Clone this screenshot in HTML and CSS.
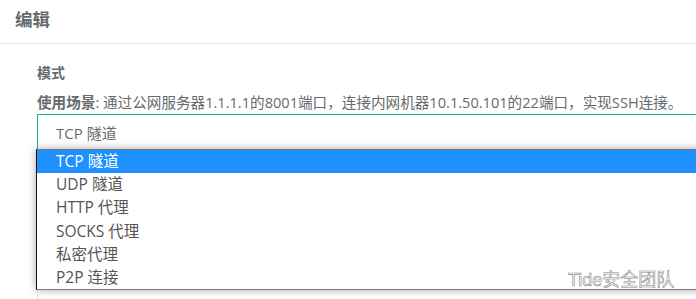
FILE: index.html
```html
<!DOCTYPE html>
<html lang="en">
<head>
  <meta charset="UTF-8">
  <meta name="viewport" content="width=device-width, initial-scale=1.0">
  <title>编辑</title>
  <link rel="stylesheet" href="styles.css">
</head>
<body>
  <div class="panel">
    <div class="panel-title">
      <h5>编辑</h5>
    </div>
    <div class="panel-body">
      <div class="form-group">
        <label class="label">模式</label>
        <p class="help"><b>使用场景</b>: 通过公网服务器1.1.1.1的8001端口，连接内网机器10.1.50.101的22端口，实现SSH连接。</p>
        <div class="select-wrap">
          <div class="select">TCP 隧道</div>
          <ul class="dropdown">
            <li class="option selected">TCP 隧道</li>
            <li class="option">UDP 隧道</li>
            <li class="option">HTTP 代理</li>
            <li class="option">SOCKS 代理</li>
            <li class="option">私密代理</li>
            <li class="option">P2P 连接</li>
          </ul>
        </div>
        <div class="next-field"></div>
      </div>
    </div>
  </div>
  <div class="watermark">Tide安全团队</div>
</body>
</html>
```

FILE: styles.css
```css
html, body {
  margin: 0;
  padding: 0;
  overflow: hidden;
  height: 299px;
}
body {
  font-family: "Open Sans", "Noto Sans CJK SC", sans-serif;
  color: #676a6c;
  background: #fff;
  position: relative;
}
.panel {
  height: 299px;
  overflow: hidden;
}
.panel-title {
  height: 44px;
  border-bottom: 1px solid #e7eaec;
  padding: 0 15px;
  box-sizing: border-box;
}
.panel-title h5 {
  margin: 0;
  padding-top: 6px;
  font-size: 17.5px;
  font-weight: 700;
  line-height: 26px;
}
.panel-body {
  padding: 19px 0 0 37px;
}
.label {
  display: block;
  font-size: 14px;
  font-weight: 700;
  line-height: 20px;
}
.help {
  margin: 9px 0 0;
  font-size: 14.6px;
  line-height: 20px;
  white-space: nowrap;
}
.help b {
  font-weight: 700;
}
.select-wrap {
  position: relative;
  margin-top: 2px;
  width: 720px;
}
.select {
  height: 35px;
  border: 1px solid #1ab394;
  border-bottom: none;
  padding-left: 18px;
  font-size: 15px;
  line-height: 36px;
}
.dropdown {
  position: absolute;
  top: 35px;
  left: -1px;
  right: 0;
  margin: 0;
  padding: 0;
  list-style: none;
  background: #fff;
  border: 1px solid #777;
  border-left-color: #111;
  box-shadow: 0 0 8px rgba(0, 0, 0, 0.35);
}
.option {
  height: 23.2px;
  line-height: 23.2px;
  padding-left: 19px;
  font-size: 15.5px;
  color: #555;
}
.option.selected {
  background: #1e90ff;
  color: #fff;
}
.next-field {
  height: 150px;
  border-left: 1px solid #e5e6e7;
}
.watermark {
  position: absolute;
  left: 568px;
  top: 265px;
  font-family: "Liberation Sans", "Noto Sans CJK SC", sans-serif;
  font-size: 18px;
  color: #fff;
  -webkit-text-stroke: 0.6px #888;
}
```
